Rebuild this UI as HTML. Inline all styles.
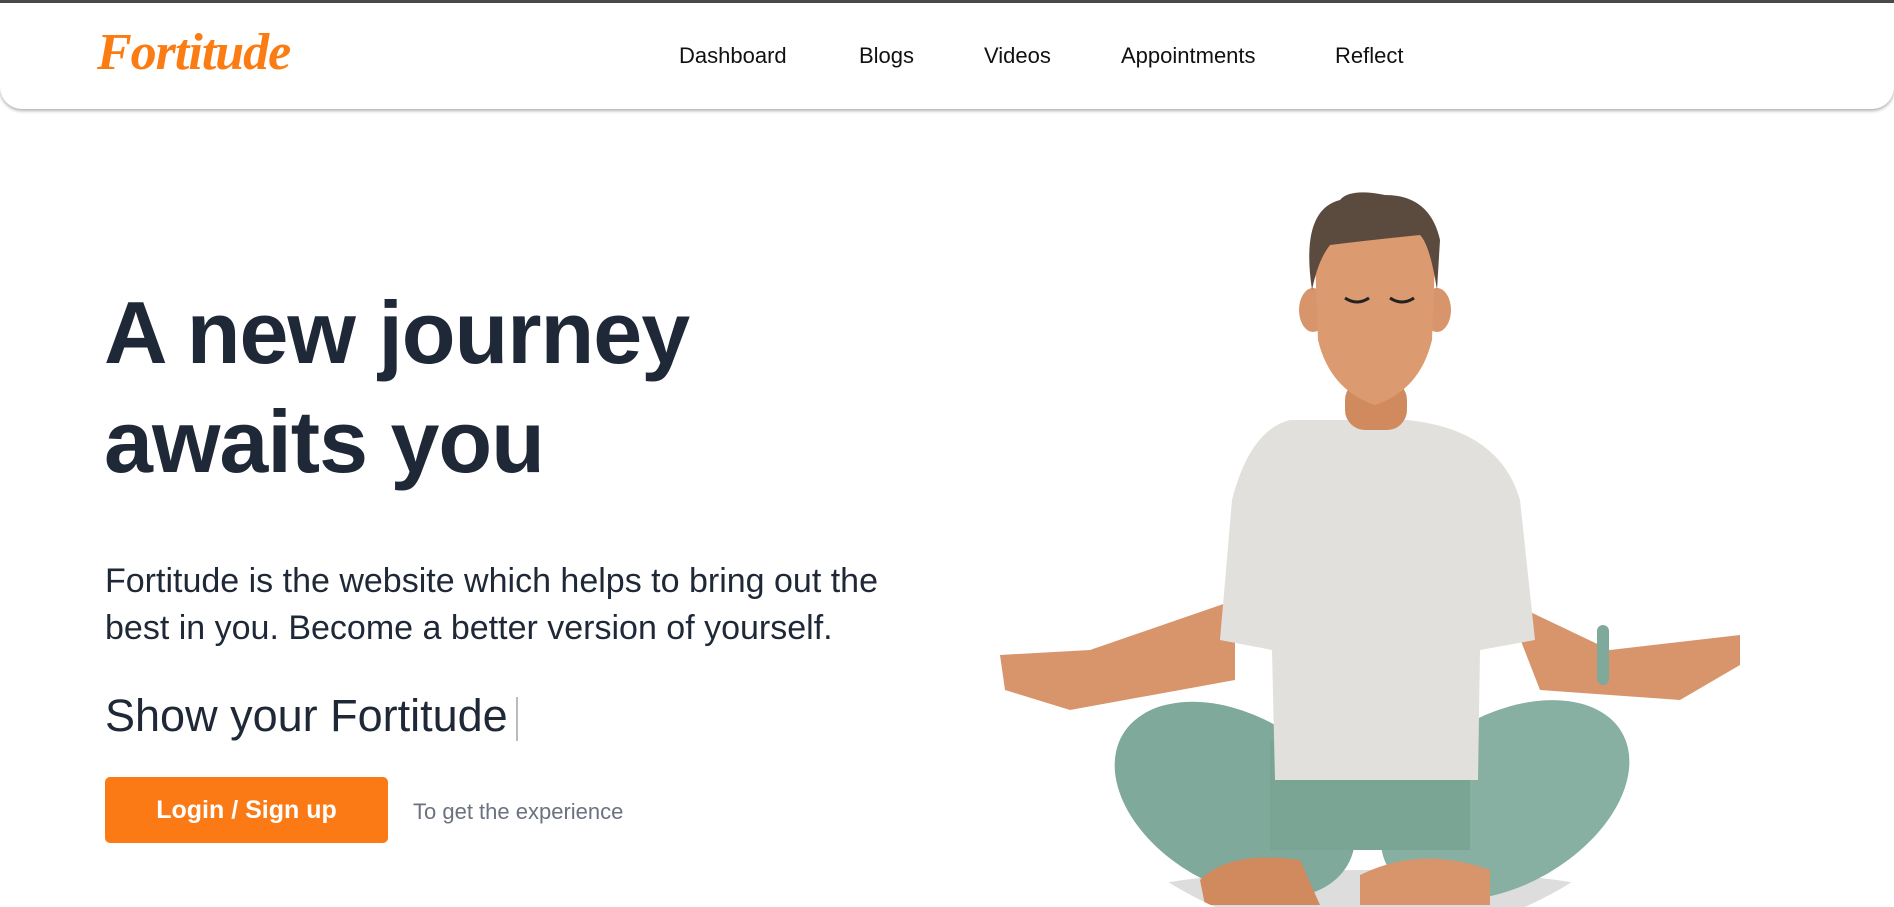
<!DOCTYPE html>
<html><head><meta charset="utf-8"><style>
*{margin:0;padding:0;box-sizing:border-box}
body{width:1894px;height:907px;overflow:hidden;background:#fff;font-family:"Liberation Sans",sans-serif;position:relative}
.top{position:absolute;left:0;top:0;width:1894px;height:3px;background:#4a4a4a}
.nav{position:absolute;left:0;top:3px;width:1894px;height:106px;background:#fff;border-radius:0 0 22px 22px;box-shadow:0 2px 3px rgba(0,0,0,.3)}
.logo{position:absolute;left:97px;top:20px;font-family:"Liberation Serif",serif;font-style:italic;font-weight:bold;font-size:52px;color:#fb7c12;letter-spacing:-1px}
.nav a{position:absolute;top:40px;font-size:22px;color:#111;text-decoration:none}
h1{position:absolute;left:104px;top:278px;font-size:88px;line-height:109px;font-weight:bold;color:#1f2837;letter-spacing:-1px}
.p{position:absolute;left:105px;top:558px;font-size:34px;line-height:47px;color:#1f2837;width:840px}
.show{position:absolute;left:105px;top:690px;font-size:45px;color:#1f2837}
.show span{display:inline-block;width:2px;height:44px;background:#bbb;vertical-align:middle;margin-left:8px}
.btn{position:absolute;left:105px;top:777px;width:283px;height:66px;background:#fb7a16;border-radius:5px;color:#fff;font-weight:bold;font-size:25px;text-align:center;line-height:66px}
.hint{position:absolute;left:413px;top:799px;font-size:22px;color:#6b7280}
</style></head><body>
<div class="top"></div>
<div class="nav">
<div class="logo">Fortitude</div>
<a style="left:679px">Dashboard</a>
<a style="left:859px">Blogs</a>
<a style="left:984px">Videos</a>
<a style="left:1121px">Appointments</a>
<a style="left:1335px">Reflect</a>
</div>
<h1>A new journey<br>awaits you</h1>
<div class="p">Fortitude is the website which helps to bring out the best in you. Become a better version of yourself.</div>
<div class="show">Show your Fortitude<span></span></div>
<div class="btn">Login / Sign up</div>
<div class="hint">To get the experience</div>
<svg style="position:absolute;left:0;top:0" width="1894" height="907">
<defs><clipPath id="c"><circle cx="1370" cy="560" r="380"/><rect x="990" y="180" width="780" height="560"/></clipPath></defs>
<g clip-path="url(#c)">
<ellipse cx="1370" cy="900" rx="250" ry="30" fill="#ddd"/>
<path d="M1235 600 L1090 650 L1000 655 L1005 690 L1070 710 L1235 680 Z" fill="#d8956c"/>
<path d="M1505 600 L1610 650 L1740 635 L1740 665 L1680 700 L1540 690 Z" fill="#d8956c"/>
<rect x="1597" y="625" width="12" height="60" rx="6" fill="#7fa99a"/>
<ellipse cx="1235" cy="800" rx="130" ry="85" fill="#7fa99a" transform="rotate(30 1235 800)"/>
<ellipse cx="1505" cy="800" rx="135" ry="85" fill="#87b0a2" transform="rotate(-30 1505 800)"/>
<rect x="1270" y="740" width="200" height="110" fill="#7aa494"/>
<path d="M1200 880 Q1230 850 1300 860 L1320 905 L1205 905 Z" fill="#d08a5e"/>
<path d="M1360 875 Q1420 845 1490 870 L1490 905 L1360 905 Z" fill="#d8956c"/>
<path d="M1290 420 L1408 420 Q1500 430 1520 500 L1535 640 L1480 650 L1478 780 L1275 780 L1272 650 L1220 640 L1232 500 Q1250 430 1290 420 Z" fill="#e2e0dc"/>
<rect x="1345" y="380" width="62" height="50" rx="20" fill="#d08a5e"/>
<ellipse cx="1313" cy="310" rx="14" ry="22" fill="#d8956c"/>
<ellipse cx="1437" cy="310" rx="14" ry="22" fill="#d8956c"/>
<path d="M1315 260 Q1315 210 1375 210 Q1435 210 1435 260 L1432 340 Q1420 390 1375 405 Q1330 390 1318 340 Z" fill="#dc9a70"/>
<path d="M1312 290 Q1300 210 1340 200 Q1350 188 1385 195 Q1430 195 1440 240 L1437 290 Q1430 245 1420 235 Q1370 240 1330 245 Q1318 260 1312 290 Z" fill="#5b4a3e"/>
<path d="M1345 298 q12 8 24 0 M1390 298 q12 8 24 0" stroke="#222" stroke-width="3" fill="none"/>
</g>
</svg>
</body></html>
